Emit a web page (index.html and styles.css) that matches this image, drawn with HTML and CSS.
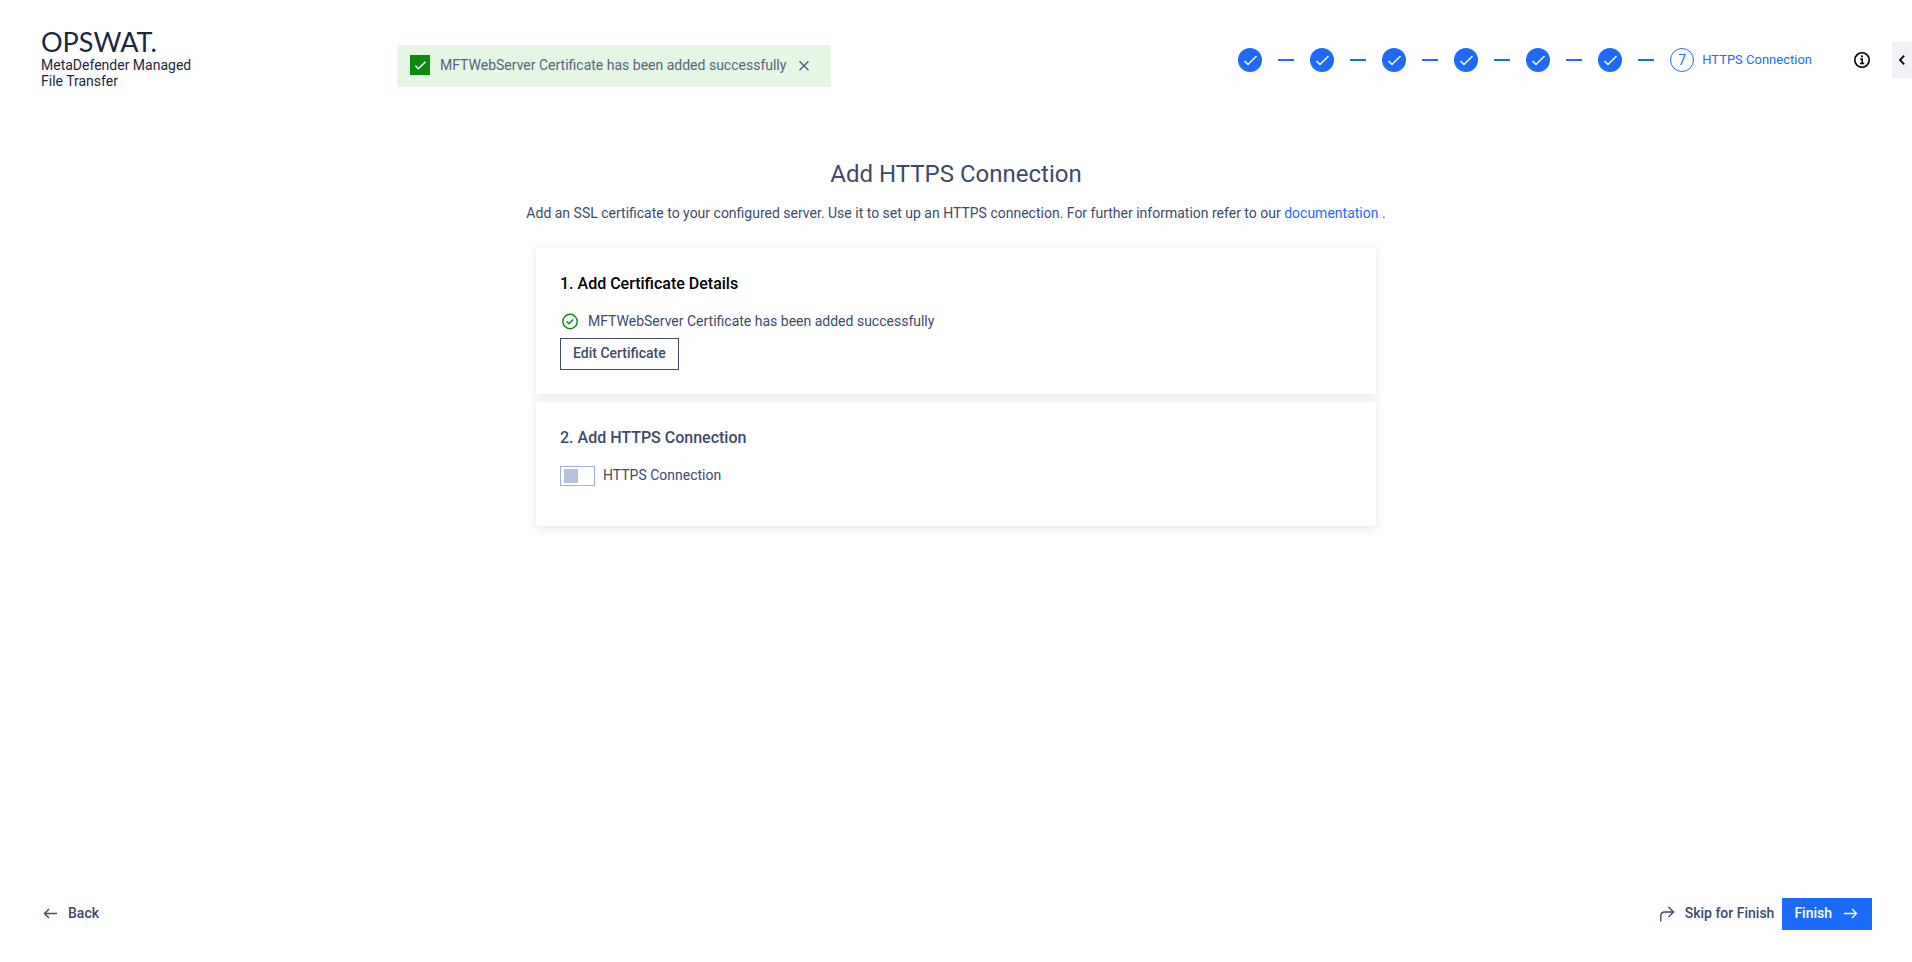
FILE: index.html
```html
<!DOCTYPE html>
<html lang="en">
<head>
    <meta charset="UTF-8">
    <meta name="viewport" content="width=device-width, initial-scale=1.0">
    <title>MetaDefender Managed File Transfer</title>
    <link rel="stylesheet" href="styles.css">
</head>
<body>
    <svg class="sprite" aria-hidden="true">
        <symbol id="check" viewBox="0 0 24 24">
            <path d="M6.5 13L10 16.5L18.5 8"/>
        </symbol>
    </svg>

    <header class="header">
        <div class="brand">
            <div class="logo">OPSWAT.</div>
            <div class="product">MetaDefender Managed<br>File Transfer</div>
        </div>
        <div class="header-right">
            <ol class="steps">
                <li class="step"><svg class="step-circle done"><use href="#check"/></svg></li>
                <li class="step"><svg class="step-circle done"><use href="#check"/></svg></li>
                <li class="step"><svg class="step-circle done"><use href="#check"/></svg></li>
                <li class="step"><svg class="step-circle done"><use href="#check"/></svg></li>
                <li class="step"><svg class="step-circle done"><use href="#check"/></svg></li>
                <li class="step"><svg class="step-circle done"><use href="#check"/></svg></li>
                <li class="step current"><span class="step-circle">7</span>HTTPS Connection</li>
            </ol>
            <button class="icon-btn" type="button" aria-label="Information">
                <svg class="info" viewBox="0 0 20 20">
                    <circle cx="10" cy="10" r="7.2"/>
                    <path d="M8.2 9H10.2V13.4M8 13.5H12.2"/>
                    <path class="dot" d="M9 5.5H11V7.3H9Z"/>
                </svg>
            </button>
        </div>
    </header>

    <div class="toast" role="status">
        <svg class="toast-check" viewBox="0 0 24 24"><use href="#check"/></svg>
        <span>MFTWebServer Certificate has been added successfully</span>
        <button class="icon-btn" type="button" aria-label="Close">
            <svg class="close" viewBox="0 0 16 16"><path d="M3.5 4.3L12.5 13.3M12.5 4.3L3.5 13.3"/></svg>
        </button>
    </div>

    <button class="drawer-toggle" type="button" aria-label="Open panel">
        <svg viewBox="0 0 20 20"><path d="M12.2 5.7L8 10L12.2 14.3"/></svg>
    </button>

    <main class="main">
        <h1>Add HTTPS Connection</h1>
        <p class="intro">Add an SSL certificate to your configured server. Use it to set up an HTTPS connection. For further information refer to our <a href="#">documentation</a> .</p>

        <section class="card">
            <h2 class="active">1. Add Certificate Details</h2>
            <div class="status">
                <svg class="status-icon" viewBox="0 0 20 20">
                    <circle cx="10" cy="10.5" r="7.2"/>
                    <path d="M6.7 10.5L9 12.8L13.3 8.5"/>
                </svg>
                <span>MFTWebServer Certificate has been added successfully</span>
            </div>
            <button class="btn outline" type="button">Edit Certificate</button>
        </section>

        <section class="card">
            <h2>2. Add HTTPS Connection</h2>
            <div class="switch-row">
                <input class="switch" type="checkbox" role="switch" id="https">
                <label for="https">HTTPS Connection</label>
            </div>
        </section>
    </main>

    <footer class="footer">
        <button class="btn text" type="button">
            <svg class="icon" viewBox="0 0 20 20"><path d="M17 10.5H5M9 6L4.5 10.5L9 15"/></svg>
            Back
        </button>
        <div class="footer-right">
            <button class="btn text" type="button">
                <svg class="icon" viewBox="0 0 20 20"><path d="M3.8 18.5V13Q3.8 9 7.8 9H16M11.5 4L16.5 9L11.5 14"/></svg>
                Skip for Finish
            </button>
            <button class="btn primary" type="button">
                Finish
                <svg class="icon" viewBox="0 0 20 20"><path d="M4 10.5H16M12 6L16.5 10.5L12 15"/></svg>
            </button>
        </div>
    </footer>
</body>
</html>
```
FILE: styles.css
```css
* {
    box-sizing: border-box;
}
body {
    display: flex;
    flex-direction: column;
    min-height: 100vh;
    margin: 0;
    background-color: #fff;
    color: #3d4a68;
    font-family: Roboto, "Liberation Sans", sans-serif;
    font-size: 14px;
    line-height: 18px;
}
h1, h2, p, ol {
    margin: 0;
    padding: 0;
}
a {
    color: #1d6bfc;
    text-decoration: none;
}
button {
    font: inherit;
    color: inherit;
    cursor: pointer;
}
svg {
    display: block;
    fill: none;
    stroke: currentColor;
}
.sprite {
    position: absolute;
    width: 0;
    height: 0;
}

/* header */
.header {
    display: flex;
    justify-content: space-between;
    align-items: center;
    height: 120px;
    padding: 0 40px;
}
.brand {
    padding: 0 0 2px 1px;
    color: #1b273c;
}
.logo {
    margin-bottom: 2px;
    font-family: Lato, sans-serif;
    font-size: 27px;
    font-weight: 400;
    line-height: 26px;
}
.product {
    line-height: 16px;
}
.header-right {
    display: flex;
    align-items: center;
    gap: 40px;
}
.steps {
    display: flex;
    list-style: none;
    color: #1d6bfc;
    font-size: 13px;
}
.step {
    display: flex;
    align-items: center;
}
.step:not(:last-child)::after {
    content: "";
    width: 16px;
    height: 2px;
    margin: 0 16px;
    background-color: #1d6bfc;
}
.step-circle {
    width: 24px;
    height: 24px;
    border-radius: 50%;
}
.step-circle.done {
    background-color: #1d6bfc;
    color: #fff;
    stroke-width: 1.5;
}
.step.current {
    gap: 8px;
}
.current .step-circle {
    border: 1px solid #1d6bfc;
    font-size: 14px;
    line-height: 22px;
    text-align: center;
}
.icon-btn {
    padding: 0;
    border: none;
    background: none;
}
.info {
    width: 20px;
    height: 20px;
    color: #000;
    stroke-width: 1.6;
}
.info .dot {
    fill: #000;
    stroke: none;
}

/* notification */
.toast {
    position: absolute;
    top: 45px;
    left: 397px;
    display: flex;
    align-items: center;
    gap: 10px;
    height: 42px;
    padding: 0 19px 2px 13px;
    background-color: #e5f7e4;
    color: #56637e;
}
.toast-check {
    width: 20px;
    height: 20px;
    background-color: #088c0b;
    color: #fff;
    stroke-width: 1.8;
}
.close {
    width: 16px;
    height: 16px;
    stroke-width: 1.5;
}
.drawer-toggle {
    position: absolute;
    top: 42px;
    right: 0;
    width: 20px;
    height: 36px;
    padding: 0;
    border: none;
    background-color: #f0f2f8;
    color: #000;
    stroke-width: 1.8;
}

/* content */
.main {
    flex: 1;
    display: flex;
    flex-direction: column;
    align-items: center;
    gap: 8px;
    padding: 38px 24px;
}
h1 {
    font-size: 24px;
    font-weight: 400;
    line-height: 32px;
}
.intro {
    margin: 6px 0 18px;
    text-align: center;
}
.card {
    width: 100%;
    max-width: 840px;
    padding: 24px;
    background-color: #fff;
    box-shadow: 0 2px 10px rgba(61, 84, 134, 0.15);
}
h2 {
    margin-bottom: 16px;
    font-size: 16px;
    font-weight: 500;
    line-height: 24px;
}
h2.active {
    color: #000;
}
.status {
    display: flex;
    align-items: center;
    gap: 8px;
    height: 18px;
    margin-bottom: 8px;
}
.status-icon {
    width: 20px;
    height: 20px;
    color: #088c0b;
    stroke-width: 1.4;
}
.switch-row {
    display: flex;
    gap: 8px;
    margin-bottom: 16px;
}
.switch {
    appearance: none;
    width: 35px;
    height: 20px;
    margin: 0;
    padding: 2px 3px;
    border: 1px solid #9fb2d9;
    cursor: pointer;
}
.switch::before {
    content: "";
    display: block;
    width: 14px;
    height: 14px;
    background-color: #b7c1dd;
}
.switch:checked {
    padding-left: 16px;
}

/* buttons */
.btn {
    display: flex;
    align-items: center;
    gap: 8px;
    height: 32px;
    padding: 0 12px 2px;
    border: none;
    background: none;
    font-weight: 500;
}
.btn.outline {
    border: 1px solid #3d4a68;
}
.btn.text {
    padding: 0 0 2px;
}
.btn.primary {
    background-color: #1d6bfc;
    color: #fff;
}
.icon {
    width: 20px;
    height: 20px;
    stroke-width: 1.4;
}

/* footer */
.footer, .footer-right {
    display: flex;
    justify-content: space-between;
    gap: 8px;
}
.footer {
    padding: 0 40px 32px;
}
```
